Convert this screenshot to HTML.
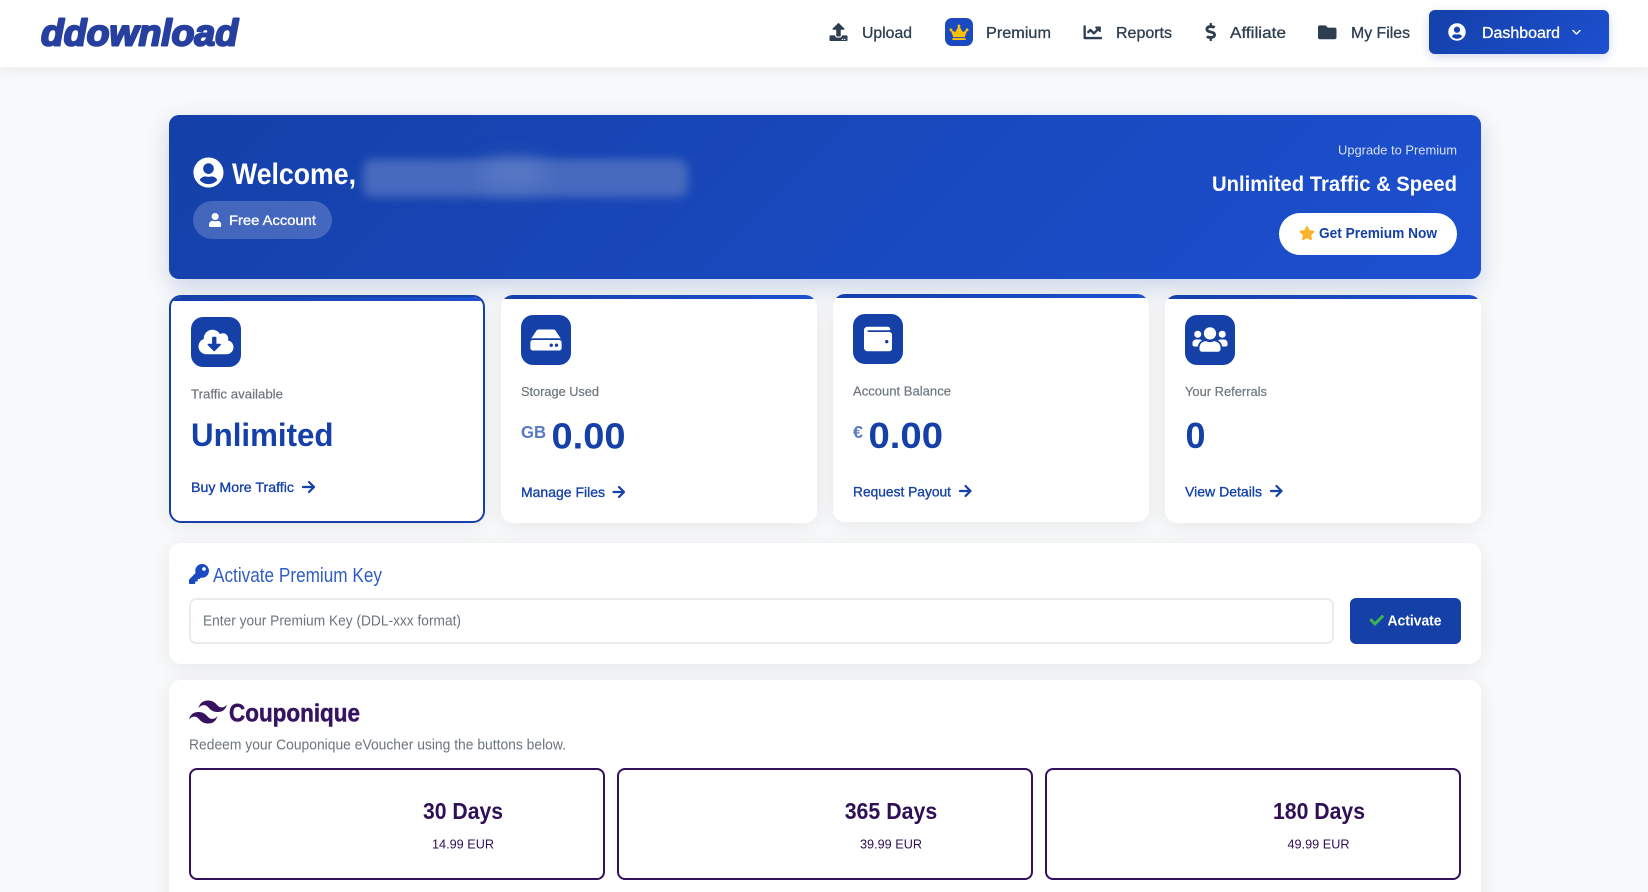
<!DOCTYPE html>
<html lang="en">
<head>
<meta charset="utf-8">
<title>ddownload Dashboard</title>
<style>
html,body{margin:0;padding:0;width:1648px;height:892px;overflow:hidden;background:#f8f9fa;font-family:"Liberation Sans",sans-serif}
#w{position:relative;width:1648px;height:892px;overflow:hidden;background:#f8f9fa}
.b{position:absolute;box-sizing:border-box}
svg.o{position:absolute;left:0;top:0}
.card{background:#fff;border-radius:12px;box-shadow:0 4px 20px rgba(0,0,0,.07);overflow:hidden}
.bar{position:absolute;left:0;right:0;top:0;height:4px;background:linear-gradient(90deg,#1440a8,#1d50d0)}
.ic{background:#1440a8;border-radius:12px;width:50px;height:50px}
.pk{background:#fff;border:2px solid #35105c;border-radius:8px}
text{font-family:"Liberation Sans",sans-serif}
.nav{font-size:16px;fill:#2c3e50;stroke:#2c3e50;stroke-width:.3}
.lab{font-size:13px;fill:#6c757d;stroke:#6c757d;stroke-width:.18}
.big{font-weight:700;fill:#1440a8}
.lnk{font-size:14px;fill:#1440a8;stroke:#1440a8;stroke-width:.32}
.day{font-size:23px;font-weight:700;fill:#2f0f56}
.pr{font-size:13px;fill:#2f0f56}
.arr{fill:none;stroke:#1440a8;stroke-width:2.2;stroke-linecap:round;stroke-linejoin:round}
</style>
</head>
<body>
<div id="w">
<div class="b" style="left:0;top:0;width:1648px;height:67px;background:#fff;box-shadow:0 2px 15px rgba(0,0,0,.07)"></div>
<div class="b" style="left:945px;top:18px;width:28px;height:28px;border-radius:7px;background:#1a4ac0"></div>
<div class="b" style="left:1429px;top:10px;width:180px;height:44px;border-radius:6px;background:linear-gradient(135deg,#1440a8,#1d50d0);box-shadow:0 3px 10px rgba(20,64,168,.2)"></div>

<div class="b" style="left:169px;top:115px;width:1312px;height:164px;border-radius:10px;background:linear-gradient(135deg,#1440a8,#1d50d0);box-shadow:0 8px 24px rgba(20,64,168,.2);overflow:hidden">
  <div class="b" style="left:194px;top:44px;width:325px;height:38px;background:#4769be;filter:blur(4.5px);border-radius:10px"></div>
  <div class="b" style="left:310px;top:46px;width:70px;height:26px;background:#5b7bc5;filter:blur(11px);border-radius:50%"></div>
  <div class="b" style="left:24px;top:86px;width:139px;height:38px;background:rgba(255,255,255,.2);border-radius:19px"></div>
  <div class="b" style="left:1110px;top:98px;width:178px;height:42px;background:#fff;border-radius:21px"></div>
</div>

<div class="b card" style="left:169px;top:295px;width:316px;height:228px;border:2px solid #1440a8"><div class="bar"></div></div>
<div class="b card" style="left:501px;top:295px;width:316px;height:228px"><div class="bar"></div></div>
<div class="b card" style="left:833px;top:294px;width:316px;height:228px"><div class="bar"></div></div>
<div class="b card" style="left:1165px;top:295px;width:316px;height:228px"><div class="bar"></div></div>
<div class="b ic" style="left:191px;top:317px"></div>
<div class="b ic" style="left:521px;top:315px"></div>
<div class="b ic" style="left:853px;top:314px"></div>
<div class="b ic" style="left:1185px;top:315px"></div>

<div class="b card" style="left:169px;top:543px;width:1312px;height:121px"></div>
<div class="b" style="left:189px;top:598px;width:1145px;height:46px;border:2px solid #e9ecef;border-radius:7px;background:#fff"></div>
<div class="b" style="left:1350px;top:598px;width:111px;height:46px;border-radius:6px;background:#1440a8"></div>

<div class="b card" style="left:169px;top:680px;width:1312px;height:240px"></div>
<div class="b pk" style="left:189px;top:768px;width:416px;height:112px"></div>
<div class="b pk" style="left:617px;top:768px;width:416px;height:112px"></div>
<div class="b pk" style="left:1045px;top:768px;width:416px;height:112px"></div>

<svg class="o" width="1648" height="892" viewBox="0 0 1648 892" xmlns="http://www.w3.org/2000/svg">
<defs>
<path id="uc" d="M248 8C111 8 0 119 0 256s111 248 248 248 248-111 248-248S385 8 248 8zm0 96c48.6 0 88 39.4 88 88s-39.4 88-88 88-88-39.4-88-88 39.4-88 88-88zm0 344c-58.7 0-111.3-26.6-146.5-68.2 18.8-35.4 55.6-59.8 98.5-59.8 2.4 0 4.8.4 7.1 1.1 13 4.2 26.6 6.9 40.9 6.9 14.3 0 28-2.7 40.9-6.9 2.3-.7 4.7-1.1 7.1-1.1 42.9 0 79.7 24.4 98.5 59.8C359.3 421.4 306.7 448 248 448z"/>
</defs>

<!-- logo -->
<text x="41" y="45.5" font-size="37" font-weight="700" font-style="italic" fill="#27409f" stroke="#27409f" stroke-width="2.1" stroke-linejoin="round" textLength="197" lengthAdjust="spacingAndGlyphs">ddownload</text>

<!-- nav -->
<svg x="829.5" y="23" width="18" height="18" viewBox="0 0 512 512" fill="#2c3e50"><path d="M296 384h-80c-13.3 0-24-10.7-24-24V192h-87.7c-17.8 0-26.7-21.5-14.1-34.1L242.3 5.7c7.5-7.5 19.8-7.5 27.3 0l152.2 152.2c12.6 12.6 3.7 34.1-14.1 34.1H320v168c0 13.3-10.7 24-24 24zm216-8v112c0 13.3-10.7 24-24 24H24c-13.3 0-24-10.7-24-24V376c0-13.3 10.7-24 24-24h136v8c0 30.9 25.1 56 56 56h80c30.9 0 56-25.1 56-56v-8h136c13.3 0 24 10.7 24 24zm-124 88c0-11-9-20-20-20s-20 9-20 20 9 20 20 20 20-9 20-20zm64 0c0-11-9-20-20-20s-20 9-20 20 9 20 20 20 20-9 20-20z"/></svg>
<text class="nav" x="862" y="38" textLength="50" lengthAdjust="spacingAndGlyphs">Upload</text>
<svg x="949.5" y="24.5" width="19" height="15.5" viewBox="0 0 640 512" preserveAspectRatio="none" fill="#ffc107"><path d="M528 448H112c-8.8 0-16 7.2-16 16v32c0 8.8 7.2 16 16 16h416c8.8 0 16-7.2 16-16v-32c0-8.8-7.2-16-16-16zm64-320c-26.5 0-48 21.5-48 48 0 7.1 1.6 13.7 4.4 19.8L476 239.2c-15.4 9.2-35.3 4-44.2-11.6L350.3 85C361 76.2 368 63 368 48c0-26.5-21.5-48-48-48s-48 21.5-48 48c0 15 7 28.2 17.7 37l-81.5 142.6c-8.9 15.6-28.9 20.8-44.2 11.6l-72.3-43.4c2.7-6 4.4-12.7 4.4-19.8 0-26.5-21.5-48-48-48S0 149.5 0 176s21.5 48 48 48c2.6 0 5.2-.4 7.7-.8L128 416h384l72.3-192.8c2.5.4 5.1.8 7.7.8 26.5 0 48-21.5 48-48s-21.5-48-48-48z"/></svg>
<text class="nav" x="986" y="38" textLength="65" lengthAdjust="spacingAndGlyphs">Premium</text>
<svg x="1083.5" y="23" width="18.5" height="18.5" viewBox="0 0 512 512" fill="#2c3e50"><path d="M496 384H64V80c0-8.84-7.16-16-16-16H16C7.16 64 0 71.16 0 80v336c0 17.67 14.33 32 32 32h464c8.84 0 16-7.16 16-16v-32c0-8.84-7.16-16-16-16zM464 96H345.94c-21.38 0-32.09 25.85-16.97 40.97l32.4 32.4L288 242.75l-73.37-73.37c-12.5-12.5-32.76-12.5-45.25 0l-68.69 68.69c-6.25 6.25-6.25 16.38 0 22.63l22.62 22.62c6.25 6.25 16.38 6.25 22.63 0L192 237.25l73.37 73.37c12.5 12.5 32.76 12.5 45.25 0l96-96 32.4 32.4c15.12 15.12 40.97 4.41 40.97-16.97V112c0-8.84-7.16-16-16-16z"/></svg>
<text class="nav" x="1116" y="38" textLength="56" lengthAdjust="spacingAndGlyphs">Reports</text>
<svg x="1205.5" y="23" width="10.5" height="18" viewBox="0 0 288 512" preserveAspectRatio="none" fill="#2c3e50"><path d="M209.2 233.4l-108-31.6C88.7 198.2 80 186.5 80 173.5c0-16.3 13.2-29.5 29.5-29.5h66.3c12.2 0 24.2 3.7 34.2 10.5 6.1 4.1 14.3 3.1 19.5-2l34.8-34c7.1-6.9 6.1-18.4-1.8-24.5C238 74.8 207.4 64.1 176 64V16c0-8.8-7.2-16-16-16h-32c-8.8 0-16 7.2-16 16v48h-2.5C45.8 64-5.4 118.7.5 183.6c4.2 46.1 39.4 83.6 83.8 96.6l102.5 30c12.5 3.7 21.2 15.3 21.2 28.3 0 16.3-13.2 29.5-29.5 29.5h-66.3C100 368 88 364.3 78 357.5c-6.1-4.1-14.3-3.1-19.5 2l-34.8 34c-7.1 6.9-6.1 18.4 1.8 24.5 24.5 19.2 55.1 29.9 86.5 30v48c0 8.8 7.2 16 16 16h32c8.8 0 16-7.2 16-16v-48.2c46.6-.9 90.3-28.6 105.7-72.7 21.5-61.6-14.6-124.8-72.5-141.7z"/></svg>
<text class="nav" x="1230" y="38" textLength="56" lengthAdjust="spacingAndGlyphs">Affiliate</text>
<svg x="1318" y="23" width="18.5" height="18.5" viewBox="0 0 512 512" fill="#2c3e50"><path d="M464 128H272l-64-64H48C21.49 64 0 85.49 0 112v288c0 26.51 21.49 48 48 48h416c26.51 0 48-21.49 48-48V176c0-26.51-21.49-48-48-48z"/></svg>
<text class="nav" x="1351" y="38" textLength="59" lengthAdjust="spacingAndGlyphs">My Files</text>
<svg x="1448" y="23" width="18" height="18" viewBox="0 0 496 512" fill="#fff"><use href="#uc"/></svg>
<text x="1482" y="38" font-size="16" fill="#fff" stroke="#fff" stroke-width=".3" textLength="78" lengthAdjust="spacingAndGlyphs">Dashboard</text>
<polyline points="1573,30.5 1576.5,34 1580,30.5" fill="none" stroke="#fff" stroke-width="1.4" stroke-linecap="round" stroke-linejoin="round"/>

<!-- hero -->
<svg x="193" y="157" width="31" height="31" viewBox="0 0 496 512" fill="#fff"><use href="#uc"/></svg>
<text x="232" y="184" font-size="30" font-weight="700" fill="#fff" textLength="124" lengthAdjust="spacingAndGlyphs">Welcome,</text>
<svg x="209" y="213" width="12.25" height="14" viewBox="0 0 448 512" fill="#fff"><path d="M224 256c70.7 0 128-57.3 128-128S294.7 0 224 0 96 57.3 96 128s57.3 128 128 128zm89.6 32h-16.7c-22.2 10.2-46.9 16-72.9 16s-50.6-5.8-72.9-16h-16.7C60.2 288 0 348.2 0 422.4V464c0 26.5 21.5 48 48 48h352c26.5 0 48-21.5 48-48v-41.6c0-74.2-60.2-134.4-134.4-134.4z"/></svg>
<text x="229" y="225" font-size="14" fill="#fff" stroke="#fff" stroke-width=".32" textLength="87" lengthAdjust="spacingAndGlyphs">Free Account</text>
<text x="1338" y="154.5" font-size="13" fill="#fff" fill-opacity=".82" textLength="119" lengthAdjust="spacingAndGlyphs">Upgrade to Premium</text>
<text x="1212" y="191" font-size="21.5" font-weight="700" fill="#fff" textLength="245" lengthAdjust="spacingAndGlyphs">Unlimited Traffic &amp; Speed</text>
<svg x="1299" y="226" width="16" height="14.2" viewBox="0 0 576 512" fill="#fbb32d"><path d="M259.3 17.8L194 150.2 47.9 171.5c-26.2 3.8-36.7 36.1-17.7 54.6l105.7 103-25 145.5c-4.5 26.3 23.2 46 46.4 33.7L288 439.6l130.7 68.7c23.2 12.2 50.9-7.4 46.4-33.7l-25-145.5 105.7-103c19-18.5 8.5-50.8-17.7-54.6L382 150.2 316.7 17.8c-11.7-23.6-45.6-23.9-57.4 0z"/></svg>
<text x="1319" y="238" font-size="15" font-weight="700" fill="#1440a8" textLength="118" lengthAdjust="spacingAndGlyphs">Get Premium Now</text>

<!-- card icons -->
<svg x="198.5" y="328" width="35" height="28" viewBox="0 0 640 512" fill="#fff"><path d="M537.6 226.6c4.1-10.7 6.4-22.4 6.4-34.6 0-53-43-96-96-96-19.7 0-38.1 6-53.3 16.2C367 64.2 315.3 32 256 32c-88.4 0-160 71.6-160 160 0 2.7.1 5.4.2 8.1C40.2 219.8 0 273.2 0 336c0 79.5 64.5 144 144 144h368c70.7 0 128-57.3 128-128 0-61.9-44-113.6-102.4-125.4zm-132.9 88.7L299.3 420.7c-6.2 6.2-16.4 6.2-22.6 0L171.3 315.3c-10.1-10.1-2.9-27.3 11.3-27.3H248V176c0-8.8 7.2-16 16-16h48c8.8 0 16 7.2 16 16v112h65.4c14.2 0 21.4 17.2 11.3 27.3z"/></svg>
<svg x="530.25" y="326" width="31.5" height="28" viewBox="0 0 576 512" fill="#fff"><path d="M576 304v96c0 26.51-21.49 48-48 48H48c-26.51 0-48-21.49-48-48v-96c0-26.51 21.49-48 48-48h480c26.51 0 48 21.49 48 48zm-48-80a79.557 79.557 0 0 1 30.777 6.165L462.25 85.374A48.003 48.003 0 0 0 422.311 64H153.689a48 48 0 0 0-39.938 21.374L17.223 230.165A79.557 79.557 0 0 1 48 224h480zm-48 96c-17.673 0-32 14.327-32 32s14.327 32 32 32 32-14.327 32-32-14.327-32-32-32zm-96 0c-17.673 0-32 14.327-32 32s14.327 32 32 32 32-14.327 32-32-14.327-32-32-32z"/></svg>
<svg x="864" y="325" width="28" height="28" viewBox="0 0 512 512" fill="#fff"><path d="M461.2 128H80c-8.84 0-16-7.16-16-16s7.16-16 16-16h384c8.84 0 16-7.16 16-16 0-26.51-21.49-48-48-48H64C28.65 32 0 60.65 0 96v320c0 35.35 28.65 64 64 64h397.2c28.02 0 50.8-21.53 50.8-48V176c0-26.47-22.78-48-50.8-48zM416 336c-17.67 0-32-14.33-32-32s14.33-32 32-32 32 14.33 32 32-14.33 32-32 32z"/></svg>
<svg x="1192.5" y="325.5" width="35" height="28" viewBox="0 0 640 512" fill="#fff"><path d="M96 224c35.3 0 64-28.7 64-64s-28.7-64-64-64-64 28.7-64 64 28.7 64 64 64zm448 0c35.3 0 64-28.7 64-64s-28.7-64-64-64-64 28.7-64 64 28.7 64 64 64zm32 32h-64c-17.6 0-33.5 7.1-45.1 18.6 40.3 22.1 68.9 62 75.1 109.4h66c17.7 0 32-14.3 32-32v-32c0-35.3-28.7-64-64-64zm-256 0c61.9 0 112-50.1 112-112S381.9 32 320 32 208 82.1 208 144s50.1 112 112 112zm76.8 32h-8.3c-20.8 10-43.9 16-68.5 16s-47.6-6-68.5-16h-8.3C179.6 288 128 339.6 128 403.2V432c0 26.5 21.5 48 48 48h288c26.5 0 48-21.5 48-48v-28.8c0-63.6-51.6-115.2-115.2-115.2zm-223.7-13.4C161.5 263.1 145.6 256 128 256H64c-35.3 0-64 28.7-64 64v32c0 17.7 14.3 32 32 32h65.9c6.3-47.4 34.9-87.3 75.2-109.4z"/></svg>

<!-- card text -->
<text class="lab" x="191" y="398.5" textLength="92" lengthAdjust="spacingAndGlyphs">Traffic available</text>
<text class="lab" x="521" y="396" textLength="78" lengthAdjust="spacingAndGlyphs">Storage Used</text>
<text class="lab" x="853" y="395.5" textLength="98" lengthAdjust="spacingAndGlyphs">Account Balance</text>
<text class="lab" x="1185" y="396" textLength="82" lengthAdjust="spacingAndGlyphs">Your Referrals</text>

<text class="big" x="191" y="446" font-size="32" textLength="142.5" lengthAdjust="spacingAndGlyphs">Unlimited</text>
<text class="big" x="521" y="438" font-size="17.5" fill-opacity=".7" textLength="25" lengthAdjust="spacingAndGlyphs">GB</text>
<text class="big" x="551.5" y="448.5" font-size="36" textLength="74" lengthAdjust="spacingAndGlyphs">0.00</text>
<text class="big" x="853" y="438" font-size="17.5" fill-opacity=".7" textLength="10" lengthAdjust="spacingAndGlyphs">€</text>
<text class="big" x="868.5" y="448" font-size="36" textLength="74.5" lengthAdjust="spacingAndGlyphs">0.00</text>
<text class="big" x="1185.5" y="448" font-size="36" textLength="20" lengthAdjust="spacingAndGlyphs">0</text>

<text class="lnk" x="191" y="492" textLength="103" lengthAdjust="spacingAndGlyphs">Buy More Traffic</text>
<path class="arr" d="M303 487h11M309 482l5 5-5 5"/>
<text class="lnk" x="521" y="497" textLength="84" lengthAdjust="spacingAndGlyphs">Manage Files</text>
<path class="arr" d="M613.5 492h10.5M619 487l5 5-5 5"/>
<text class="lnk" x="853" y="496.5" textLength="98" lengthAdjust="spacingAndGlyphs">Request Payout</text>
<path class="arr" d="M960 491h10.5M965.5 486l5 5-5 5"/>
<text class="lnk" x="1185" y="496.5" textLength="77" lengthAdjust="spacingAndGlyphs">View Details</text>
<path class="arr" d="M1271 491h10.5M1276.5 486l5 5-5 5"/>

<!-- activate key -->
<svg x="189" y="564" width="20" height="20" viewBox="0 0 512 512" fill="#1a4ac0"><path d="M512 176.001C512 273.203 433.202 352 336 352c-11.22 0-22.19-1.062-32.827-3.069l-24.012 27.014A23.999 23.999 0 0 1 261.223 384H224v40c0 13.255-10.745 24-24 24h-40v40c0 13.255-10.745 24-24 24H24c-13.255 0-24-10.745-24-24v-78.059c0-6.365 2.529-12.47 7.029-16.971l161.802-161.802C163.108 213.814 160 195.271 160 176 160 78.798 238.797.001 335.999 0 433.488-.001 512 78.511 512 176.001zM336 128c0 26.51 21.49 48 48 48s48-21.49 48-48-21.49-48-48-48-48 21.49-48 48z"/></svg>
<text x="213" y="582" font-size="20" fill="#1a4ac0" fill-opacity=".9" textLength="169" lengthAdjust="spacingAndGlyphs">Activate Premium Key</text>
<text x="203" y="625.5" font-size="14.5" fill="#6c757d" textLength="258" lengthAdjust="spacingAndGlyphs">Enter your Premium Key (DDL-xxx format)</text>
<svg x="1369.5" y="613" width="14.5" height="14.5" viewBox="0 0 512 512" fill="#3fb54e"><path d="M173.898 439.404l-166.4-166.4c-9.997-9.997-9.997-26.206 0-36.204l36.203-36.204c9.997-9.998 26.207-9.998 36.204 0L192 312.69 432.095 72.596c9.997-9.997 26.207-9.997 36.204 0l36.203 36.204c9.997 9.997 9.997 26.206 0 36.204l-294.4 294.401c-9.998 9.997-26.207 9.997-36.204-.001z"/></svg>
<text x="1387.5" y="625.5" font-size="15" font-weight="700" fill="#fff" textLength="54" lengthAdjust="spacingAndGlyphs">Activate</text>

<!-- couponique -->
<svg x="189" y="700.5" width="38" height="23" viewBox="0 0 54 32.4" preserveAspectRatio="none" fill="#35135f"><path d="M27 0c-7.2 0-11.7 3.6-13.5 10.8 2.7-3.6 5.85-4.95 9.45-4.05 2.054.514 3.522 2.004 5.147 3.653C30.744 13.09 33.808 16.2 40.5 16.2c7.2 0 11.7-3.6 13.5-10.8-2.7 3.6-5.85 4.95-9.45 4.05-2.054-.514-3.522-2.004-5.147-3.653C36.756 3.11 33.692 0 27 0zM13.5 16.2C6.3 16.2 1.8 19.8 0 27c2.7-3.6 5.85-4.95 9.45-4.05 2.054.514 3.522 2.004 5.147 3.653C17.244 29.29 20.308 32.4 27 32.4c7.2 0 11.7-3.6 13.5-10.8-2.7 3.6-5.85 4.95-9.45 4.05-2.054-.514-3.522-2.004-5.147-3.653C23.256 19.31 20.192 16.2 13.5 16.2z"/></svg>
<text x="229" y="721.5" font-size="25" font-weight="700" fill="#35135f" stroke="#35135f" stroke-width=".5" textLength="131" lengthAdjust="spacingAndGlyphs">Couponique</text>
<text x="189" y="749.5" font-size="14.5" fill="#6c757d" textLength="377" lengthAdjust="spacingAndGlyphs">Redeem your Couponique eVoucher using the buttons below.</text>

<text class="day" x="423" y="819" textLength="80" lengthAdjust="spacingAndGlyphs">30 Days</text>
<text class="pr" x="432" y="848.5" textLength="62" lengthAdjust="spacingAndGlyphs">14.99 EUR</text>
<text class="day" x="844.7" y="819" textLength="92.5" lengthAdjust="spacingAndGlyphs">365 Days</text>
<text class="pr" x="860" y="848.5" textLength="62" lengthAdjust="spacingAndGlyphs">39.99 EUR</text>
<text class="day" x="1273" y="819" textLength="92" lengthAdjust="spacingAndGlyphs">180 Days</text>
<text class="pr" x="1287.5" y="848.5" textLength="62" lengthAdjust="spacingAndGlyphs">49.99 EUR</text>
</svg>
</div>
</body>
</html>
